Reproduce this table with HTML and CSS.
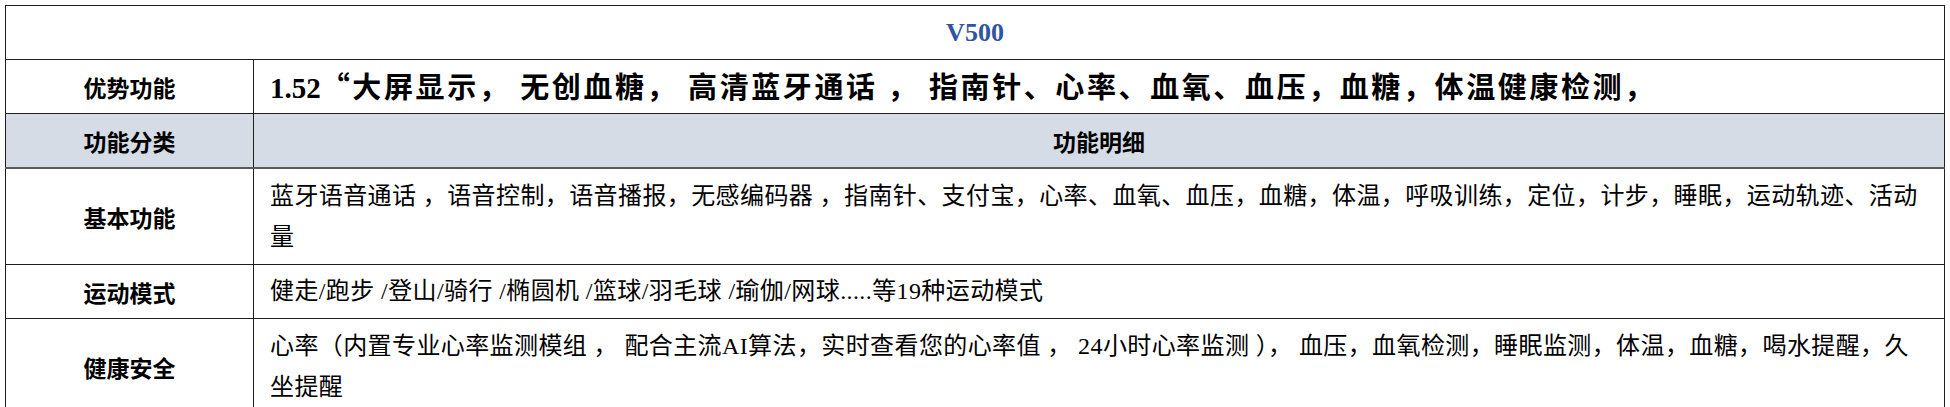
FILE: index.html
```html
<!DOCTYPE html>
<html lang="zh-CN">
<head>
<meta charset="utf-8">
<link rel="stylesheet" href="styles.css">
</head>
<body>
<table class="spec">
  <colgroup><col class="c1"><col class="c2"></colgroup>
  <tr class="r-title"><td colspan="2" class="title">V500</td></tr>
  <tr class="r-std"><td class="label">优势功能</td><td class="content strong"><span class="num">1.52</span><span class="cjk">“</span>大屏显示， 无创血糖， 高清蓝牙通话 ， 指南针、心率、血氧、血压，血糖，体温健康检测，</td></tr>
  <tr class="r-std head"><td class="label">功能分类</td><td class="label">功能明细</td></tr>
  <tr class="r-tall"><td class="label">基本功能</td><td class="content">蓝牙语音通话 ，语音控制，语音播报，无感编码器 ，指南针、支付宝，心率、血氧、血压，血糖，体温，呼吸训练，定位，计步，睡眠，运动轨迹、活动量</td></tr>
  <tr class="r-std"><td class="label">运动模式</td><td class="content">健走/跑步 /登山/骑行 /椭圆机 /篮球/羽毛球 /瑜伽/网球.....等19种运动模式</td></tr>
  <tr class="r-tall"><td class="label">健康安全</td><td class="content">心率（内置专业心率监测模组 ， 配合主流AI算法，实时查看您的心率值 ， 24小时心率监测 ）， 血压，血氧检测，睡眠监测，体温，血糖，喝水提醒，久坐提醒</td></tr>
</table>
</body>
</html>
```
FILE: styles.css
```css
html, body {
  margin: 0;
  padding: 0;
  background: #ffffff;
}
body {
  padding: 5px 5px 0 5px;
  font-family: "Liberation Serif", "Noto Sans CJK SC", serif;
  color: #000;
}
.spec {
  width: 1940px;
  border-collapse: collapse;
  table-layout: fixed;
}
.c1 { width: 248px; }
.spec td {
  border: 1px solid #1e1e1e;
  vertical-align: middle;
  padding: 0;
}
.r-title td { height: 53px; }
.r-std td { height: 53px; }
.r-tall td { height: 95px; }
.title {
  text-align: center;
  color: #2f55a0;
  font-weight: bold;
  font-size: 26px;
}
.label {
  text-align: center;
  font-family: "Noto Sans CJK SC", sans-serif;
  font-weight: bold;
  font-size: 23px;
}
.head td {
  background: #d6dce5;
  border-top-color: #6e6e6e;
  border-bottom: 2px solid #5a5a5a;
}
.content {
  padding: 0 12px 0 16px !important;
  font-size: 24px;
  letter-spacing: 0.4px;
  line-height: 41px;
}
.strong {
  font-weight: bold;
  font-size: 29px;
  letter-spacing: 2.6px;
}
.num {
  letter-spacing: 0;
}
.cjk {
  font-family: "Noto Sans CJK SC", sans-serif;
}
```
